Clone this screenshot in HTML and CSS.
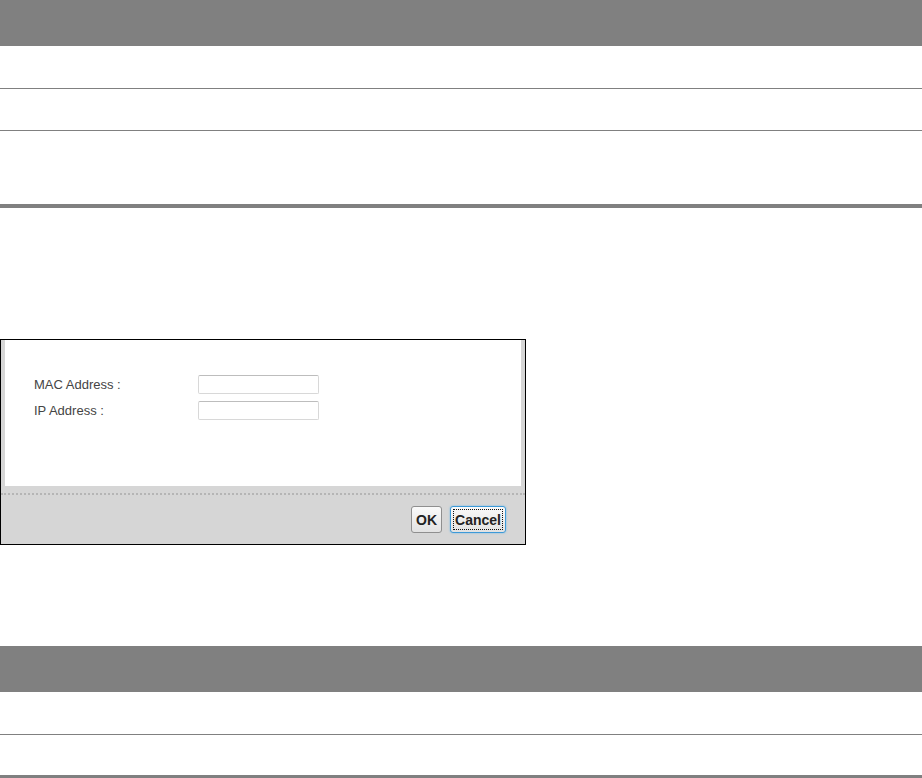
FILE: index.html
```html
<!DOCTYPE html>
<html lang="en">
<head>
  <meta charset="UTF-8" />
  <title>Static DHCP</title>
  <link rel="stylesheet" href="styles.css">
</head>
<body>

  <div class="table top-table">
    <div class="table-head"></div>
    <div class="table-row first"></div>
    <div class="table-row"></div>
    <div class="table-row tall"></div>
  </div>

  <div class="dialog">
    <div class="dialog-body">
      <div class="field">
        <label for="mac">MAC Address :</label>
        <input type="text" id="mac">
      </div>
      <div class="field">
        <label for="ip">IP Address :</label>
        <input type="text" id="ip">
      </div>
    </div>
    <div class="dialog-footer">
      <div class="dots"></div>
      <div class="buttons">
        <button class="btn">OK</button>
        <button class="btn focused">Cancel</button>
      </div>
    </div>
  </div>

  <div class="table bottom-table">
    <div class="table-head"></div>
    <div class="table-row first"></div>
    <div class="table-row"></div>
  </div>

</body>
</html>
```

FILE: styles.css
```css
body {
  margin: 0;
  background: #fff;
  font-family: "Liberation Sans", Arial, sans-serif;
  font-size: 13px;
  color: #444;
}

.table {
  border-bottom: 4px solid #808080;
}

.table-head {
  height: 46px;
  background: #808080;
}

.table-row {
  height: 41px;
  border-bottom: 1px solid #808080;
}

.table-row.first {
  height: 42px;
}

.table-row:last-child {
  border-bottom: none;
}

.top-table .table-row.tall {
  height: 73px;
}

.bottom-table {
  margin-top: 101px;
}

.bottom-table .table-row:last-child {
  height: 40px;
}

.dialog {
  margin-top: 131px;
  width: 524px;
  border: 1px solid #000;
  background: #d6d6d6;
}

.dialog-body {
  margin: 0 4px;
  height: 111px;
  padding: 35px 0 0 29px;
  background: #fff;
}

.field {
  display: flex;
  align-items: center;
  height: 19px;
  margin-bottom: 7px;
}

.field label {
  width: 164px;
}

.field input {
  width: 117px;
  height: 17px;
  padding: 0 1px;
  margin: 0;
  border: 1px solid #d8d8d8;
  border-top-color: #bdbdbd;
  border-radius: 2px;
  box-sizing: content-box;
}

.dialog-footer {
  padding: 7px 0 11px;
}

.dots {
  height: 0;
  border-top: 2px dotted #b5b5b5;
}

.buttons {
  display: flex;
  justify-content: flex-end;
  gap: 8px;
  padding-right: 19px;
  margin-top: 11px;
}

.btn {
  height: 27px;
  padding: 0 4px;
  font-family: "Liberation Sans", Arial, sans-serif;
  font-size: 14px;
  font-weight: bold;
  color: #222;
  background: linear-gradient(#fafafa, #e2e2e2);
  border: 1px solid #8f8f8f;
  border-radius: 3px;
}

.btn.focused {
  border-color: #3d9ad8;
  box-shadow: 0 0 2px #6ab8ea;
  outline: 1px dotted #111;
  outline-offset: -4px;
}
```
